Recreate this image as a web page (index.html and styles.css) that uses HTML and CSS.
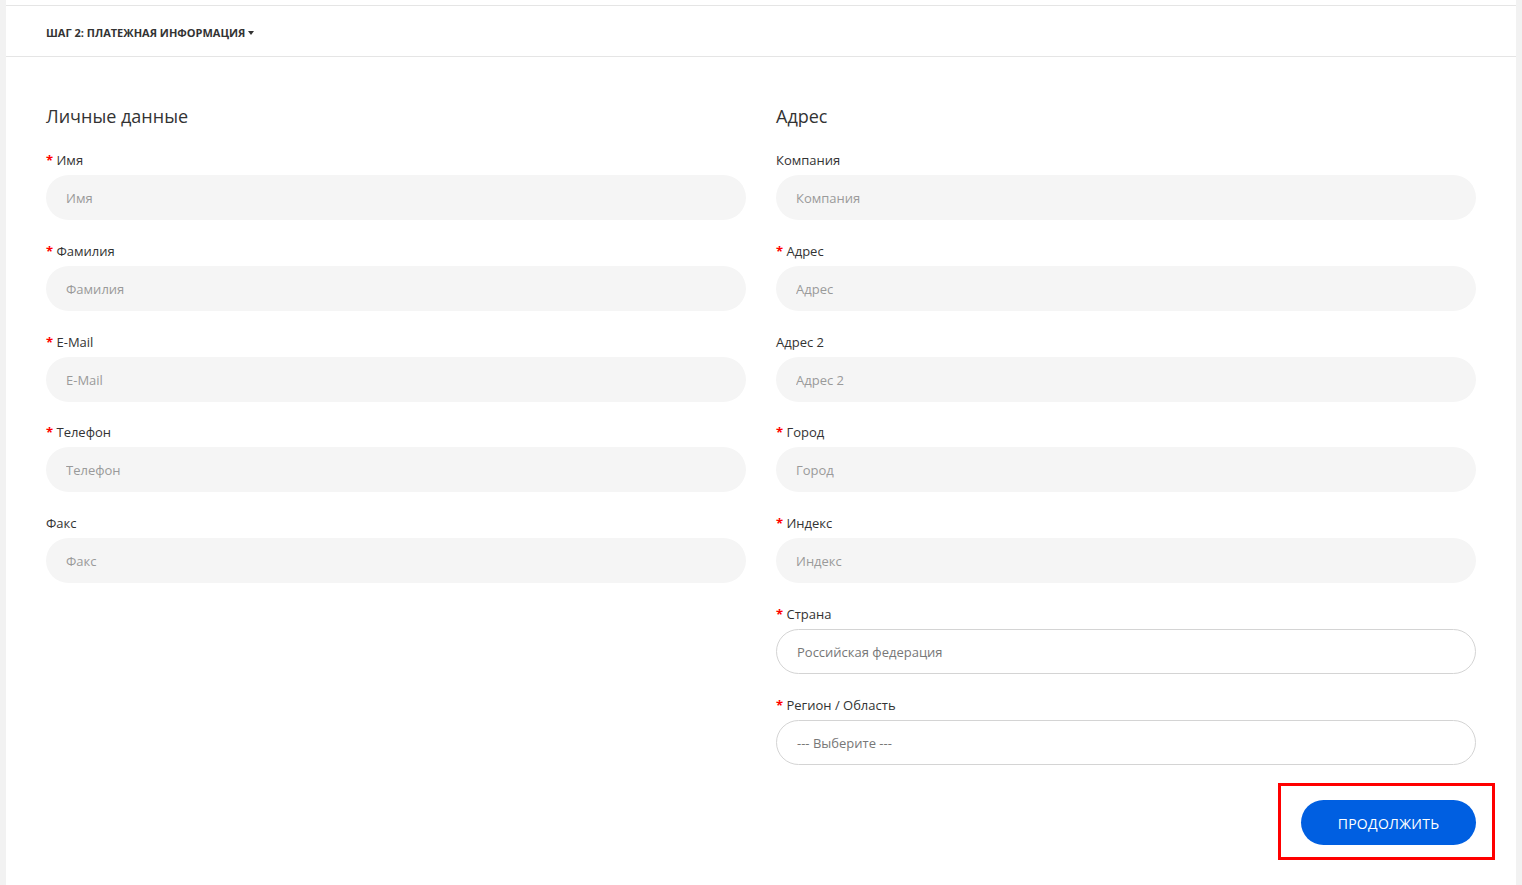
FILE: index.html
```html
<!DOCTYPE html>
<html lang="ru">
<head>
    <meta charset="UTF-8">
    <title>Оформление заказа</title>
    <link rel="stylesheet" href="styles.css">
</head>
<body>
    <div class="checkout-panel">
        <div class="panel-heading">
            <span class="panel-title">Шаг 2: Платежная информация</span>
            <span class="caret"></span>
        </div>

        <div class="panel-body">
            <div class="columns">
                <!-- Personal data -->
                <fieldset class="col">
                    <legend class="col-title">Личные данные</legend>
                    <div class="field required">
                        <label>Имя</label>
                        <input type="text" placeholder="Имя">
                    </div>
                    <div class="field required">
                        <label>Фамилия</label>
                        <input type="text" placeholder="Фамилия">
                    </div>
                    <div class="field required">
                        <label>E-Mail</label>
                        <input type="text" placeholder="E-Mail">
                    </div>
                    <div class="field required">
                        <label>Телефон</label>
                        <input type="text" placeholder="Телефон">
                    </div>
                    <div class="field">
                        <label>Факс</label>
                        <input type="text" placeholder="Факс">
                    </div>
                </fieldset>

                <!-- Address -->
                <fieldset class="col">
                    <legend class="col-title">Адрес</legend>
                    <div class="field">
                        <label>Компания</label>
                        <input type="text" placeholder="Компания">
                    </div>
                    <div class="field required">
                        <label>Адрес</label>
                        <input type="text" placeholder="Адрес">
                    </div>
                    <div class="field">
                        <label>Адрес 2</label>
                        <input type="text" placeholder="Адрес 2">
                    </div>
                    <div class="field required">
                        <label>Город</label>
                        <input type="text" placeholder="Город">
                    </div>
                    <div class="field required">
                        <label>Индекс</label>
                        <input type="text" placeholder="Индекс">
                    </div>
                    <div class="field required">
                        <label>Страна</label>
                        <div class="select">Российская федерация</div>
                    </div>
                    <div class="field required">
                        <label>Регион / Область</label>
                        <div class="select">--- Выберите ---</div>
                    </div>

                    <div class="buttons">
                        <div class="highlight">
                            <button class="btn-primary">Продолжить</button>
                        </div>
                    </div>
                </fieldset>
            </div>
        </div>
    </div>
</body>
</html>
```

FILE: styles.css
```css
* {
    margin: 0;
    padding: 0;
    box-sizing: border-box;
}

body {
    background: #f2f2f2;
    font-family: 'Open Sans', 'Liberation Sans', sans-serif;
    color: #333;
    min-height: 100vh;
}

.checkout-panel {
    margin: 0 6px;
    padding-top: 5px;
    background: #fff;
    min-height: 885px;
}

/* Heading */
.panel-heading {
    height: 52px;
    padding: 2px 40px 0;
    display: flex;
    align-items: center;
    border-top: 1px solid #e5e5e5;
    border-bottom: 1px solid #e5e5e5;
}

.panel-title {
    font-size: 11px;
    font-weight: 700;
    text-transform: uppercase;
    color: #333;
}

.caret {
    margin: 1px 0 0 3px;
    width: 0;
    height: 0;
    border-left: 3.5px solid transparent;
    border-right: 3.5px solid transparent;
    border-top: 4px solid #333;
}

/* Body */
.panel-body {
    padding: 47px 40px 0;
}

.columns {
    display: grid;
    grid-template-columns: 1fr 1fr;
    gap: 30px;
}

.col {
    border: 0;
    min-width: 0;
}

.col-title {
    display: block;
    font-size: 18px;
    line-height: 24px;
    font-weight: 400;
    color: #333;
    margin-bottom: 22px;
}

.field {
    margin-bottom: 20.8px;
}

.field label {
    display: block;
    font-size: 13px;
    line-height: 20px;
    margin-bottom: 5px;
    color: #333;
}

.field.required label::before {
    content: '* ';
    color: #f00;
    font-weight: 700;
}

.field input {
    display: block;
    width: 100%;
    height: 45px;
    padding: 1px 20px 0;
    border: 0;
    border-radius: 23px;
    background: #f5f5f5;
    font-family: inherit;
    font-size: 13px;
    color: #333;
    outline: none;
}

.field input::placeholder {
    color: #9a9a9a;
}

.select {
    height: 45px;
    padding: 1px 20px 0;
    display: flex;
    align-items: center;
    border: 1px solid #d4d4d4;
    border-radius: 23px;
    font-size: 13px;
    color: #777;
}

/* Buttons */
.buttons {
    display: flex;
    justify-content: flex-end;
    margin-top: -3px;
    margin-right: -19px;
}

.highlight {
    border: 3px solid #f00;
    padding: 14px 16px 12px 20px;
}

.btn-primary {
    display: block;
    width: 175px;
    height: 45px;
    padding-top: 3px;
    border: 0;
    border-radius: 23px;
    background: #005fe1;
    color: #fff;
    font-family: inherit;
    font-size: 14px;
    text-transform: uppercase;
    letter-spacing: 0.02em;
    cursor: pointer;
}
```
